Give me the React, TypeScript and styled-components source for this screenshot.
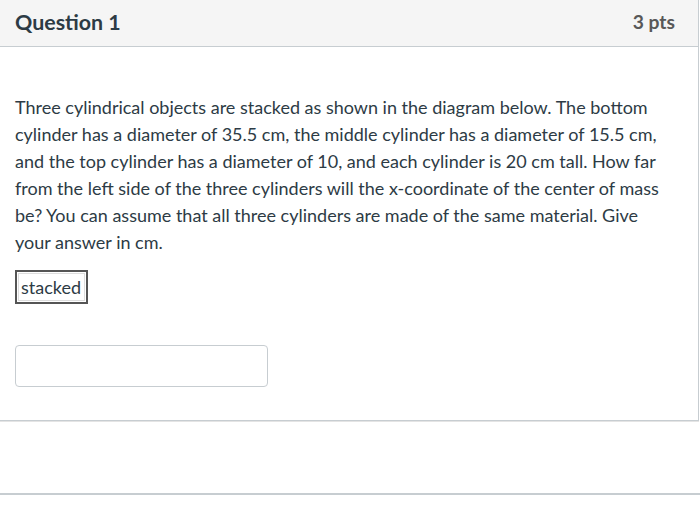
import React from 'react';
import styled, {createGlobalStyle} from "styled-components";

const Global = createGlobalStyle`
  body {
    margin: 0;
    background: #ffffff;
    font-family: Lato, 'Open Sans', sans-serif;
    color: #2d3b45;
  }
`
const Page = styled.div`
  width: 700px;
  height: 505px;
  overflow: hidden;
`
const Card = styled.div`
  width: 698px;
  border-right: 1px solid #c7cdd1;
  border-bottom: 1px solid #c7cdd1;
  box-shadow: 0 1px 0 #e4e4e4;
`
const Header = styled.div`
  display: flex;
  justify-content: space-between;
  align-items: center;
  height: 46px;
  padding: 0 23px 0 15px;
  background: #f5f5f5;
  border-bottom: 1px solid #c7cdd1;
`
const Title = styled.div`
  font-size: 21.4px;
  font-weight: bold;
  color: #2d3b45;
  margin-top: -3px;
`
const Points = styled.div`
  font-size: 19.3px;
  font-weight: bold;
  color: #585858;
  margin-top: -3px;
`
const Body = styled.div`
  padding: 47px 28px 33px 15px;
`
const Text = styled.p`
  margin: 0;
  font-size: 18px;
  line-height: 27px;
  color: #2d3b45;
`
const Tag = styled.div`
  display: inline-block;
  margin-top: 14px;
  padding: 3px 5px 3px 4px;
  border: 2px solid #555;
  outline: 1px solid #ddd;
  outline-offset: -4px;
  font-size: 18px;
  line-height: 24px;
  color: #2d3b45;
`
const Answer = styled.input`
  display: block;
  margin-top: 41px;
  width: 253px;
  height: 42px;
  box-sizing: border-box;
  border: 1px solid #c7cdd1;
  border-radius: 4px;
  background: #fff;
`
const Footer = styled.div`
  height: 72px;
  border-bottom: 2px solid #c7cdd1;
`

const App: React.FC = () => {
    return (
        <Page>
            <Global/>
            <Card>
                <Header>
                    <Title>Question 1</Title>
                    <Points>3 pts</Points>
                </Header>
                <Body>
                    <Text>
                        Three cylindrical objects are stacked as shown in the diagram below. The bottom
                        cylinder has a diameter of 35.5 cm, the middle cylinder has a diameter of 15.5 cm,
                        and the top cylinder has a diameter of 10, and each cylinder is 20 cm tall. How far
                        from the left side of the three cylinders will the x-coordinate of the center of mass
                        be? You can assume that all three cylinders are made of the same material. Give
                        your answer in cm.
                    </Text>
                    <Tag>stacked</Tag>
                    <Answer type='text'/>
                </Body>
            </Card>
            <Footer/>
        </Page>
    );
};

export default App;
